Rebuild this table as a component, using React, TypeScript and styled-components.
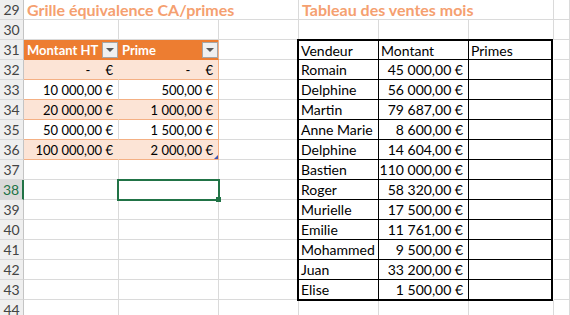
import * as React from 'react'
import styled, { createGlobalStyle } from 'styled-components'

const GRID = '#dadada'
const ORANGE = '#ed7d31'
const ORANGE_LINE = '#f4b084'
const BAND = '#fce4d6'
const GREEN = '#217346'
const FONT = "Lato, 'Liberation Sans', sans-serif"

type Kind = 'head' | 'band' | 'plain'

const PRIMES: { montant: string | null; prime: string | null }[] = [
  { montant: null, prime: null },
  { montant: '10\u00a0000,00 €', prime: '500,00 €' },
  { montant: '20\u00a0000,00 €', prime: '1\u00a0000,00 €' },
  { montant: '50\u00a0000,00 €', prime: '1\u00a0500,00 €' },
  { montant: '100\u00a0000,00 €', prime: '2\u00a0000,00 €' },
]

const SALES = [
  ['Romain', '45\u00a0000,00 €'],
  ['Delphine', '56\u00a0000,00 €'],
  ['Martin', '79\u00a0687,00 €'],
  ['Anne Marie', '8\u00a0600,00 €'],
  ['Delphine', '14\u00a0604,00 €'],
  ['Bastien', '110\u00a0000,00 €'],
  ['Roger', '58\u00a0320,00 €'],
  ['Murielle', '17\u00a0500,00 €'],
  ['Emilie', '11\u00a0761,00 €'],
  ['Mohammed', '9\u00a0500,00 €'],
  ['Juan', '33\u00a0200,00 €'],
  ['Elise', '1\u00a0500,00 €'],
]

const ROWS = Array.from({ length: 16 }, (_, i) => 29 + i)

const blanks = (n: number, prefix: string) =>
  Array.from({ length: n }, (_, i) => <Cell key={prefix + i} />)

const Filter = () => (
  <FilterButton>
    <svg width="8" height="4" viewBox="0 0 8 4">
      <path d="M0 0h8L4 4z" fill="#595959" />
    </svg>
  </FilterButton>
)

const Zero = () => (
  <>
    <Dash>-</Dash>
    <span>€</span>
  </>
)

const renderCells = (r: number) => {
  if (r === 29) {
    return [
      <Title key="t1">Grille équivalence CA/primes</Title>,
      <Title key="t2">Tableau des ventes mois</Title>,
      <Cell key="g" />,
    ]
  }
  if (r === 31) {
    return [
      <PrimeCell key="a" $kind="head">
        Montant HT
        <Filter />
      </PrimeCell>,
      <PrimeCell key="b" $kind="head" $edge>
        Prime
        <Filter />
      </PrimeCell>,
      <Cell key="c" />,
      <Cell key="g" />,
    ]
  }
  if (r >= 32 && r <= 36) {
    const row = PRIMES[r - 32]
    const kind: Kind = r % 2 === 0 ? 'band' : 'plain'
    return [
      <PrimeCell key="a" $kind={kind}>
        {row.montant ?? <Zero />}
      </PrimeCell>,
      <PrimeCell key="b" $kind={kind} $edge>
        {row.prime ?? <Zero />}
        {r === 36 && <ResizeMark />}
      </PrimeCell>,
      <Cell key="c" />,
      <Cell key="g" />,
    ]
  }
  if (r >= 37 && r <= 43) {
    return [
      <Cell key="a" />,
      <Cell key="b">
        {r === 38 && (
          <Selection>
            <FillHandle />
          </Selection>
        )}
      </Cell>,
      <Cell key="c" />,
      <Cell key="g" />,
    ]
  }
  return blanks(7, 'x')
}

export default function App() {
  return (
    <>
      <GlobalStyle />
      <Sheet>
        {ROWS.map((r) => (
          <React.Fragment key={r}>
            <RowHeader $active={r === 38}>{r}</RowHeader>
            {renderCells(r)}
          </React.Fragment>
        ))}
        <SalesTable>
          <SalesCell>Vendeur</SalesCell>
          <SalesCell>Montant</SalesCell>
          <SalesCell $lastCol>Primes</SalesCell>
          {SALES.map(([name, amount], i) => {
            const last = i === SALES.length - 1
            return (
              <React.Fragment key={i}>
                <SalesCell $lastRow={last}>{name}</SalesCell>
                <SalesCell $lastRow={last} $right>
                  {amount}
                </SalesCell>
                <SalesCell $lastRow={last} $lastCol />
              </React.Fragment>
            )
          })}
        </SalesTable>
      </Sheet>
    </>
  )
}

const GlobalStyle = createGlobalStyle`
  html, body {
    margin: 0;
    padding: 0;
    background: #fff;
    overflow: hidden;
  }
  body {
    font-family: ${FONT};
    font-size: 13px;
    color: #000;
  }
`

const Sheet = styled.div`
  display: grid;
  grid-template-columns: 24px 95px 100px 80px 80px 90px 85px 1fr;
  grid-auto-rows: 20px;
  width: 570px;
  height: 315px;
  overflow: hidden;
`

const RowHeader = styled.div<{ $active?: boolean }>`
  grid-column: 1;
  box-sizing: border-box;
  display: flex;
  align-items: center;
  justify-content: center;
  background: ${(p) => (p.$active ? '#d9d9d9' : '#efefef')};
  color: ${(p) => (p.$active ? GREEN : '#444')};
  border-right: ${(p) => (p.$active ? `2px solid ${GREEN}` : '1px solid #c4c4c4')};
  border-bottom: 1px solid ${GRID};
  font-size: 14px;
`

const Cell = styled.div`
  box-sizing: border-box;
  position: relative;
  min-width: 0;
  display: flex;
  align-items: center;
  padding: 0 3px;
  white-space: nowrap;
  border-right: 1px solid ${GRID};
  border-bottom: 1px solid ${GRID};
`

const Title = styled(Cell)`
  grid-column: span 3;
  color: #f5a070;
  font-weight: 700;
  font-size: 16px;
`

const PrimeCell = styled(Cell)<{ $kind: Kind; $edge?: boolean }>`
  justify-content: ${(p) => (p.$kind === 'head' ? 'space-between' : 'flex-end')};
  padding: ${(p) => (p.$kind === 'head' ? '0 0 0 3px' : '0 5px 0 3px')};
  background: ${(p) => (p.$kind === 'head' ? ORANGE : p.$kind === 'band' ? BAND : '#fff')};
  color: ${(p) => (p.$kind === 'head' ? '#fff' : '#000')};
  font-weight: ${(p) => (p.$kind === 'head' ? 700 : 400)};
  border-bottom-color: ${(p) => (p.$kind === 'head' ? ORANGE : ORANGE_LINE)};
  border-right-color: ${(p) =>
    p.$edge ? ORANGE_LINE : p.$kind === 'head' ? ORANGE : p.$kind === 'band' ? BAND : GRID};
`

const FilterButton = styled.span`
  width: 16px;
  height: 16px;
  box-sizing: border-box;
  display: flex;
  align-items: center;
  justify-content: center;
  background: #f0f0f0;
  border: 1px solid #a6a6a6;
`

const Dash = styled.span`
  margin-right: 15px;
`

const ResizeMark = styled.span`
  position: absolute;
  right: 0;
  bottom: 0;
  width: 0;
  height: 0;
  border-left: 4px solid transparent;
  border-bottom: 4px solid #4054b2;
`

const Selection = styled.div`
  position: absolute;
  left: -2px;
  top: -1px;
  width: 103px;
  height: 22px;
  box-sizing: border-box;
  border: 2px solid ${GREEN};
  z-index: 2;
`

const FillHandle = styled.div`
  position: absolute;
  right: -3px;
  bottom: -3px;
  width: 5px;
  height: 5px;
  background: ${GREEN};
`

const SalesTable = styled.div`
  grid-column: 5 / 8;
  grid-row: 3 / 16;
  margin: -1px 1px -1px -2px;
  box-sizing: border-box;
  border: 2px solid #000;
  background: #fff;
  display: grid;
  grid-template-columns: 80px 90px 1fr;
  grid-template-rows: 19px repeat(11, 20px) 19px;
  position: relative;
  z-index: 1;
`

const SalesCell = styled.div<{ $lastCol?: boolean; $lastRow?: boolean; $right?: boolean }>`
  box-sizing: border-box;
  display: flex;
  align-items: center;
  justify-content: ${(p) => (p.$right ? 'flex-end' : 'flex-start')};
  padding: ${(p) => (p.$right ? '0 5px 0 2px' : '0 2px')};
  white-space: nowrap;
  overflow: hidden;
  font-size: 14px;
  border-right: ${(p) => (p.$lastCol ? 'none' : '1px solid #000')};
  border-bottom: ${(p) => (p.$lastRow ? 'none' : '1px solid #000')};
`
